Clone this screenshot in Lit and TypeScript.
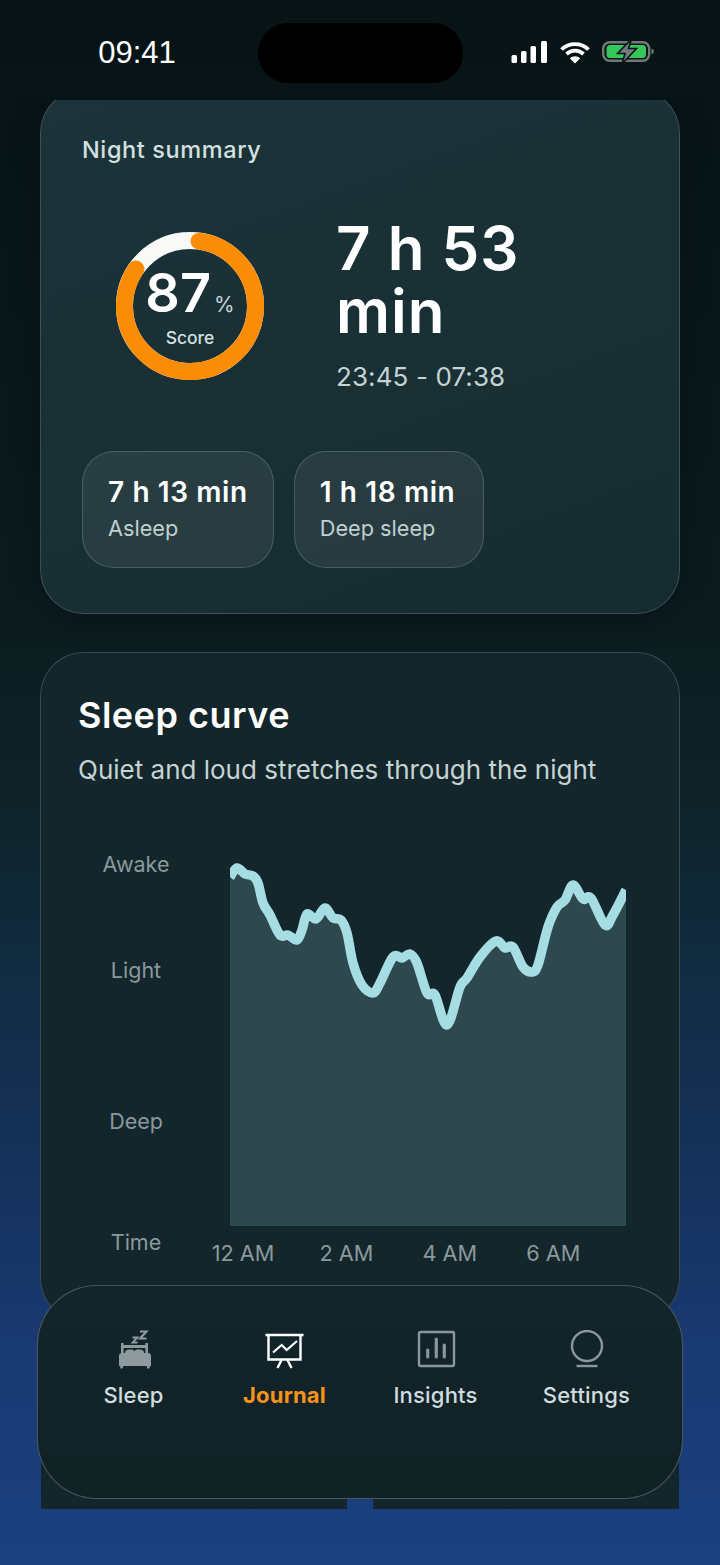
import { html, css, LitElement, svg } from "lit";
import { customElement } from "lit/decorators.js";

// curve points in plot coordinates (plot box is 396 x 366)
const RAW: [number, number][] = [
  [230, 877], [237, 868], [245, 874], [253, 876], [258, 883], [263, 903], [270, 915], [280, 935],
  [288, 935], [297, 940], [302, 930], [307, 914], [316, 919], [325, 908], [333, 918], [341, 920],
  [347, 933], [353, 963], [362, 985], [373, 993], [380, 983], [393, 957], [402, 958], [410, 954],
  [417, 963], [427, 993], [435, 995], [447, 1025], [460, 987], [467, 978], [480, 957], [496, 941],
  [505, 948], [513, 947], [523, 967], [532, 972], [538, 965], [548, 927], [557, 907], [565, 900],
  [573, 885], [583, 899], [591, 898], [605, 925], [613, 915], [626, 890],
];
const PTS = RAW.map(([x, y]) => [x - 230, y - 860]);

const smooth = (p: number[][]) => {
  let d = `M${p[0][0]} ${p[0][1]}`;
  for (let i = 0; i < p.length - 1; i++) {
    const a = p[Math.max(i - 1, 0)];
    const b = p[i];
    const c = p[i + 1];
    const e = p[Math.min(i + 2, p.length - 1)];
    const c1 = [b[0] + (c[0] - a[0]) / 6, b[1] + (c[1] - a[1]) / 6];
    const c2 = [c[0] - (e[0] - b[0]) / 6, c[1] - (e[1] - b[1]) / 6];
    d += `C${c1[0].toFixed(1)} ${c1[1].toFixed(1)} ${c2[0].toFixed(1)} ${c2[1].toFixed(1)} ${c[0]} ${c[1]}`;
  }
  return d;
};

const LINE = smooth(PTS);
const AREA = `${LINE}L396 366L0 366Z`;

const RING_R = 65.5;
const RING_LEN = 2 * Math.PI * RING_R;
const RING_FROM = 8;
const RING_SPAN = 296;

const bedIcon = svg`<svg viewBox="0 0 40 40" width="40" height="40">
  <path d="M5 26q0-3 3-3h26q3 0 3 3v10h-1l-.6 2.500h-2l-.8-2.500H9.400l-.8 2.500h-2L6 36H5z" fill="#8e9a9e"/>
  <path d="M8.300 13v10M32.700 13v10" stroke="#8e9a9e" stroke-width="2.600" fill="none"/>
  <path d="M8.300 16.500h24.400" stroke="#8e9a9e" stroke-width="3" fill="none"/>
  <path d="M11 23q0-3.500 4-3.500h3q2 0 2.500 2 .5-2 2.500-2h3q4 0 4 3.500z" fill="#8e9a9e"/>
  <path d="M18.500 7.500h5l-5 5h5" stroke="#8e9a9e" stroke-width="1.800" fill="none"/>
  <path d="M26 1.500h6.500l-6.500 7h6.500" stroke="#8e9a9e" stroke-width="2.100" fill="none"/>
</svg>`;

const boardIcon = svg`<svg viewBox="0 0 40 40" width="40" height="40">
  <path d="M.5 5h38" stroke="#fff" stroke-width="2.600" fill="none"/>
  <path d="M3.500 5v24.500h32V5" stroke="#fff" stroke-width="2.400" fill="none"/>
  <path d="M8 22.500l8.700-7.500 5 5L32 11" stroke="#fff" stroke-width="2.200" fill="none"/>
  <path d="M16.500 30l-4 8M22.500 30l4 8" stroke="#fff" stroke-width="2.400" fill="none"/>
</svg>`;

const chartIcon = svg`<svg viewBox="0 0 40 40" width="40" height="40">
  <rect x="3" y="2" width="35" height="34" rx="1.500" stroke="#8a979b" stroke-width="2.400" fill="none"/>
  <path d="M11.700 20v7M20.300 9v18M28.300 15v12" stroke="#8a979b" stroke-width="3.200" stroke-linecap="round" fill="none"/>
</svg>`;

const circleIcon = svg`<svg viewBox="0 0 40 40" width="40" height="40">
  <circle cx="20" cy="16" r="15" stroke="#8a979b" stroke-width="2.400" fill="none"/>
  <path d="M9.500 36h21" stroke="#8a979b" stroke-width="2.400" fill="none"/>
</svg>`;

@customElement("app-root")
export class AppRoot extends LitElement {
  static styles = css`
    :host {
      display: block;
      font-family: Inter, "Liberation Sans", sans-serif;
      color: #fff;
    }
    .screen {
      position: relative;
      width: 720px;
      height: 1565px;
      overflow: hidden;
      background: linear-gradient(180deg, #071315 0%, #0b1b1e 38%, #0e2226 50%, #112c42 62%, #15315a 74%, #193a72 86%, #1b4080 100%);
    }
    .status {
      height: 100px;
      padding-top: 23px;
      box-sizing: border-box;
      display: grid;
      grid-template-columns: 258px 205px 1fr;
    }
    .time {
      font-family: "Liberation Sans", Arial, sans-serif;
      font-size: 31px;
      line-height: 60px;
      text-align: center;
      padding-left: 16px;
    }
    .island {
      height: 60px;
      border-radius: 30px;
      background: #000;
    }
    .status-icons {
      display: flex;
      align-items: center;
      height: 60px;
      padding-left: 48px;
      gap: 11px;
      margin-top: -1px;
    }
    .status-icons svg {
      display: block;
      overflow: visible;
    }
    .scroll {
      height: 1409px;
      padding: 0 40px;
      box-sizing: border-box;
      overflow: hidden;
      display: flex;
      flex-direction: column;
      gap: 38px;
    }
    .card {
      flex: none;
      border: 1px solid rgba(255, 255, 255, 0.16);
      border-radius: 44px;
      box-sizing: border-box;
    }
    .summary {
      margin-top: -11px;
      height: 525px;
      padding: 45px 41px 0;
      background: linear-gradient(160deg, #1b3439 0%, #182f34 60%, #152b2f 100%);
      box-shadow: 0 8px 30px rgba(0, 0, 0, 0.25);
    }
    .summary h2 {
      margin: 0;
      font-size: 23.5px;
      line-height: 30px;
      font-weight: 500;
      color: #d4e0e0;
      letter-spacing: 0.6px;
    }
    .hero {
      display: flex;
      margin-top: 52px;
      padding-left: 34px;
      gap: 72px;
    }
    .ring {
      position: relative;
      width: 148px;
      height: 148px;
      margin-top: 15px;
      flex: none;
    }
    .ring svg {
      display: block;
    }
    .ring-label {
      position: absolute;
      inset: 0;
      padding-top: 33px;
      box-sizing: border-box;
      display: flex;
      flex-direction: column;
      align-items: center;
    }
    .pct {
      font-size: 54px;
      line-height: 56px;
      font-weight: 600;
      white-space: nowrap;
    }
    .pct small {
      font-size: 21px;
      font-weight: 400;
      color: #c9d6d6;
      margin-left: 3px;
    }
    .score {
      font-size: 17.500px;
      line-height: 24px;
      font-weight: 500;
      color: #d4e0e0;
      margin-top: -7px;
    }
    .stats {
      width: 270px;
    }
    .duration {
      font-size: 60px;
      line-height: 63px;
      font-weight: 600;
      letter-spacing: 1px;
    }
    .range {
      margin-top: 18px;
      font-size: 26px;
      line-height: 32px;
      color: #c6d3d3;
      letter-spacing: 0.1px;
    }
    .chips {
      display: flex;
      gap: 20px;
      margin-top: 58px;
    }
    .chip {
      height: 117px;
      min-width: 190px;
      box-sizing: border-box;
      padding: 22px 25px 0;
      border-radius: 32px;
      border: 1px solid rgba(255, 255, 255, 0.17);
      background: rgba(255, 255, 255, 0.07);
    }
    .chip b {
      display: block;
      font-size: 28px;
      line-height: 36px;
      font-weight: 600;
      white-space: nowrap;
      letter-spacing: 0.6px;
    }
    .chip span {
      display: block;
      margin-top: 4px;
      font-size: 21.700px;
      line-height: 28px;
      color: #c0cfcf;
    }
    .curve {
      height: 670px;
      padding: 40px 37px 0;
      background: #13262b;
    }
    .curve h2 {
      margin: 0;
      font-size: 36px;
      line-height: 44px;
      font-weight: 600;
      letter-spacing: 0.5px;
    }
    .curve p {
      margin: 17px 0 0;
      font-size: 26px;
      line-height: 32px;
      color: #c6d3d3;
      white-space: nowrap;
    }
    .chart {
      display: flex;
      margin-top: 63px;
      gap: 36px;
    }
    .axis {
      width: 116px;
      display: grid;
      grid-template-rows: 106px 151px 121px auto;
      text-align: center;
      font-size: 21.500px;
      line-height: 30px;
      color: #8a999b;
    }
    .plot {
      margin-top: 11px;
    }
    .plot svg {
      display: block;
    }
    .ticks {
      display: grid;
      grid-template-columns: repeat(4, 103.4px);
      margin: 13px 0 0 -38.700px;
      font-size: 21.700px;
      line-height: 28px;
      color: #8a999b;
      text-align: center;
      white-space: nowrap;
    }
    .duo {
      flex: none;
      display: grid;
      grid-template-columns: 306px 306px;
      gap: 26px;
      padding: 0 1px;
    }
    .duo div {
      height: 260px;
      background: #13262b;
      border-radius: 44px 44px 0 0;
    }
    .nav {
      position: absolute;
      left: 37px;
      top: 1285px;
      width: 646px;
      height: 214px;
      box-sizing: border-box;
      padding: 44px 20px 0;
      display: flex;
      border: 1px solid rgba(255, 255, 255, 0.24);
      border-radius: 60px;
      background: linear-gradient(180deg, #12252b, #112225);
    }
    .tab {
      width: 151px;
      display: flex;
      flex-direction: column;
      align-items: center;
      gap: 11px;
      font-size: 22px;
      line-height: 28px;
      font-weight: 500;
      letter-spacing: 0.2px;
      color: #d0dcdf;
    }
    .tab svg {
      display: block;
    }
    .tab.on {
      color: #f7931a;
      font-weight: 700;
    }
  `;

  private statusIcons() {
    return html`
      <svg width="37" height="24" viewBox="0 0 37 24">
        <rect x="0.500" y="15" width="5.500" height="8" rx="1.500" fill="#fff" />
        <rect x="10" y="11" width="5.500" height="12" rx="1.500" fill="#fff" />
        <rect x="19.500" y="6" width="5.500" height="17" rx="1.500" fill="#fff" />
        <rect x="30" y="1" width="6" height="22" rx="1.500" fill="#fff" />
      </svg>
      <svg width="32" height="24" viewBox="0 0 32 24">
        <path d="M2.500 9.500a19.500 19.500 0 0 1 27 0M7.500 14a12.500 12.500 0 0 1 17 0" stroke="#fff" stroke-width="3.800" fill="none" />
        <path d="M10.800 18.300a7.800 7.800 0 0 1 10.400 0L16 23.500z" fill="#fff" />
      </svg>
      <svg width="53" height="24" viewBox="0 0 53 24">
        <rect x="1.200" y="2.200" width="46" height="18.600" rx="6.500" fill="none" stroke="#6e7b7b" stroke-width="2.400" />
        <rect x="4.500" y="5" width="39.500" height="13" rx="3.500" fill="#35c759" />
        <path d="M49.500 8.500q2.500 .8 2.500 3t-2.500 3z" fill="#6e7b7b" />
        <path d="M29.500 -1L15.500 13.500h7.500L20 24 34.500 8.500h-8z" fill="#6f7b7c" stroke="#0a1618" stroke-width="1.600" />
      </svg>
    `;
  }

  render() {
    const dash = (RING_SPAN / 360) * RING_LEN;
    return html`
      <div class="screen">
        <div class="status">
          <div class="time">09:41</div>
          <div class="island"></div>
          <div class="status-icons">${this.statusIcons()}</div>
        </div>

        <div class="scroll">
          <section class="card summary">
            <h2>Night summary</h2>
            <div class="hero">
              <div class="ring">
                <svg width="148" height="148" viewBox="0 0 148 148">
                  <circle cx="74" cy="74" r="${RING_R}" fill="none" stroke="#f9f9f7" stroke-width="17" />
                  <circle
                    cx="74"
                    cy="74"
                    r="${RING_R}"
                    fill="none"
                    stroke="#fb8c05"
                    stroke-width="17"
                    stroke-linecap="round"
                    stroke-dasharray="${dash} ${RING_LEN}"
                    transform="rotate(${RING_FROM - 90} 74 74)"
                  />
                </svg>
                <div class="ring-label">
                  <div class="pct">87<small>%</small></div>
                  <div class="score">Score</div>
                </div>
              </div>
              <div class="stats">
                <div class="duration">7 h 53 min</div>
                <div class="range">23:45 - 07:38</div>
              </div>
            </div>
            <div class="chips">
              <div class="chip"><b>7 h 13 min</b><span>Asleep</span></div>
              <div class="chip"><b>1 h 18 min</b><span>Deep sleep</span></div>
            </div>
          </section>

          <section class="card curve">
            <h2>Sleep curve</h2>
            <p>Quiet and loud stretches through the night</p>
            <div class="chart">
              <div class="axis">
                <span>Awake</span><span>Light</span><span>Deep</span><span>Time</span>
              </div>
              <div class="plot">
                <svg width="396" height="366" viewBox="0 0 396 366">
                  <path d="${AREA}" fill="#2e494e" />
                  <path d="${LINE}" fill="none" stroke="#a6dde3" stroke-width="9.500" stroke-linejoin="round" />
                </svg>
                <div class="ticks">
                  <span>12 AM</span><span>2 AM</span><span>4 AM</span><span>6 AM</span>
                </div>
              </div>
            </div>
          </section>

          <div class="duo"><div></div><div></div></div>
        </div>

        <nav class="nav">
          <div class="tab">${bedIcon}<span>Sleep</span></div>
          <div class="tab on">${boardIcon}<span>Journal</span></div>
          <div class="tab">${chartIcon}<span>Insights</span></div>
          <div class="tab">${circleIcon}<span>Settings</span></div>
        </nav>
      </div>
    `;
  }
}
